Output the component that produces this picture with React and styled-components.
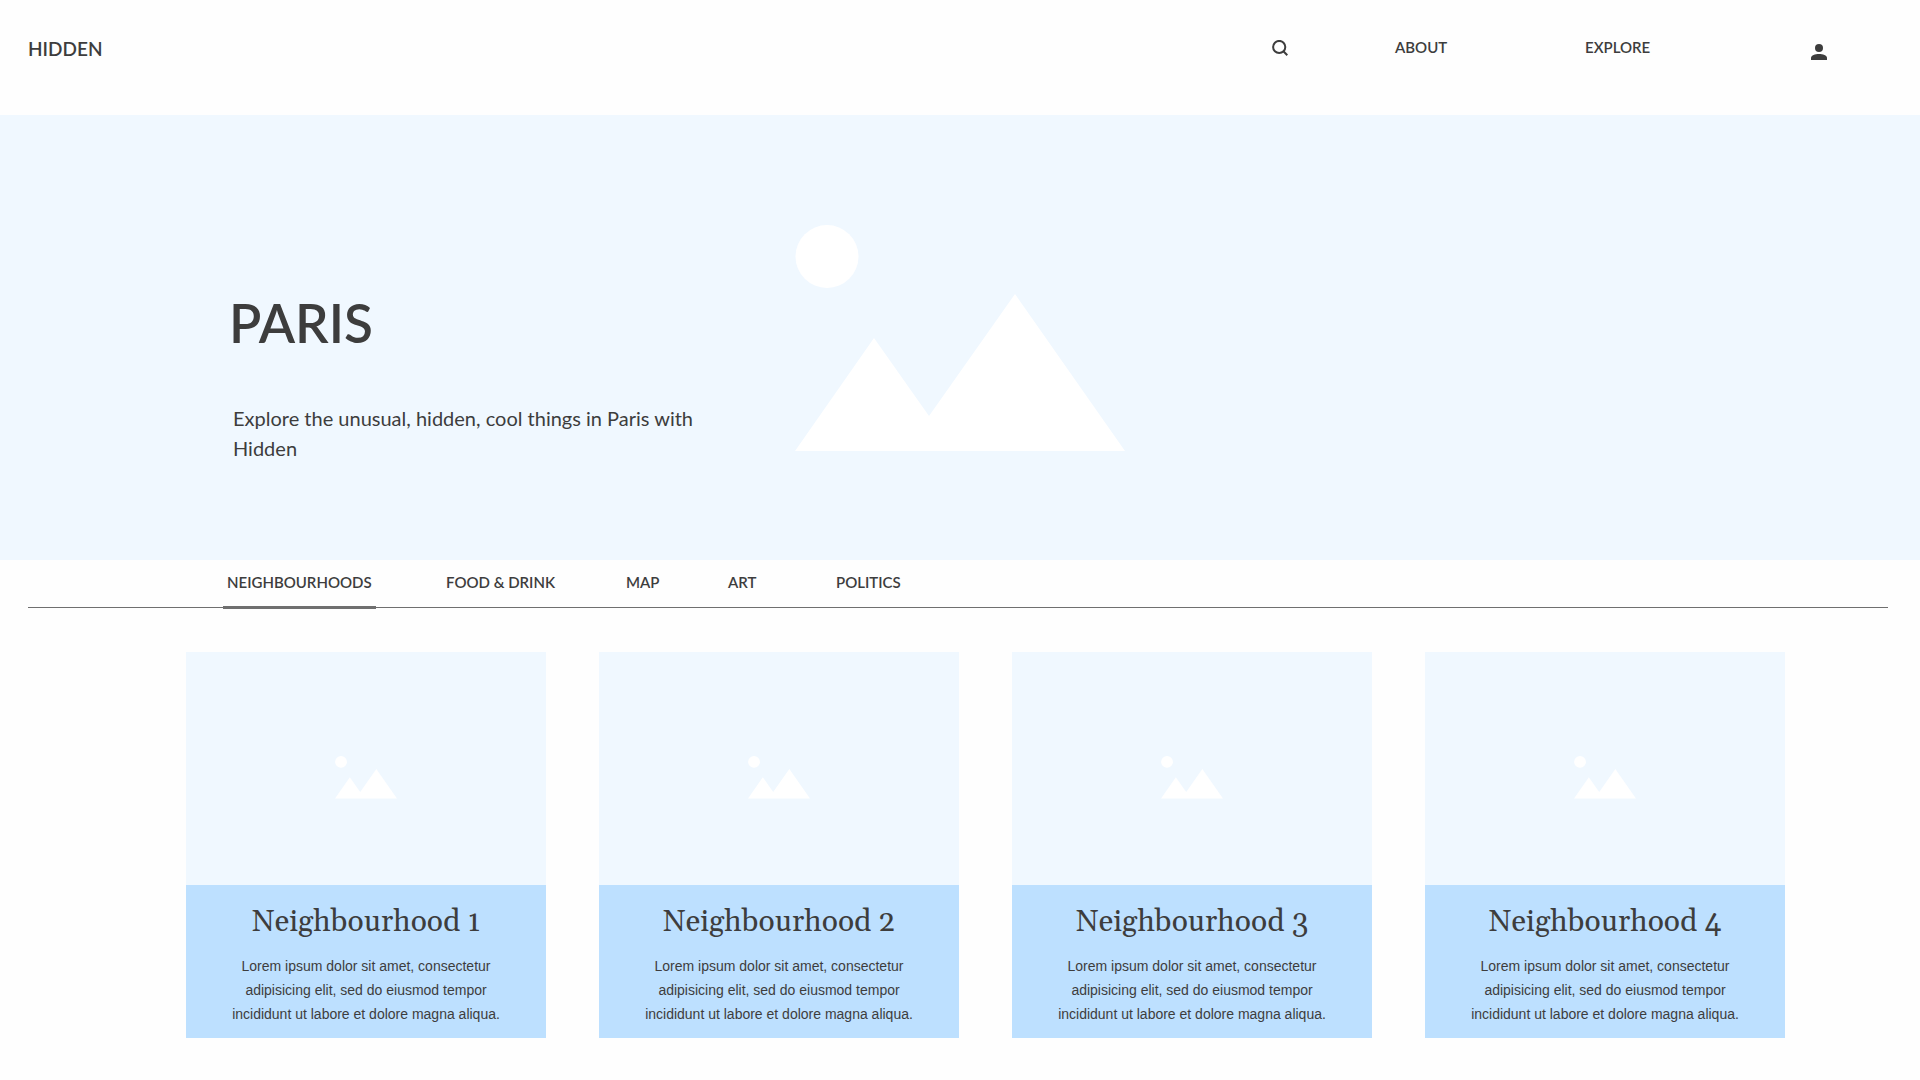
import React, { useState } from "react";
import styled, { createGlobalStyle } from "styled-components";

const GlobalStyle = createGlobalStyle`
  *, *::before, *::after { box-sizing: border-box; }
  body {
    margin: 0;
    background: #fefefe;
    color: #3d3d3d;
    font-family: Lato, "Liberation Sans", sans-serif;
  }
  h1, h2, p { margin: 0; }
`;

const Header = styled.header`
  display: flex;
  justify-content: space-between;
  align-items: flex-start;
  height: 115px;
  padding: 36px 93px 0 28px;
`;

const Logo = styled.a`
  color: inherit;
  font-size: 19px;
  font-weight: 600;
  line-height: 26px;
  text-decoration: none;
`;

const Nav = styled.nav`
  display: grid;
  grid-template-columns: 123px 190px 226px 16px;
  align-items: start;
`;

const NavLink = styled.a`
  color: inherit;
  font-size: 15px;
  font-weight: 600;
  line-height: 22px;
  text-decoration: none;
`;

const IconButton = styled.button`
  display: flex;
  justify-self: start;
  width: 16px;
  padding: ${(p) => (p.$low ? "8px 0 0" : "4px 0 0")};
  border: 0;
  background: none;
  color: inherit;
  cursor: pointer;
`;

const Hero = styled.section`
  display: grid;
  grid-template-columns: 565px 330px;
  align-items: start;
  min-height: 445px;
  padding: 110px 0 0 230px;
  background: #f0f8ff;
`;

const HeroText = styled.div`
  padding: 66px 100px 0 0;
`;

const HeroTitle = styled.h1`
  margin-left: -1px;
  font-size: 53px;
  font-weight: 600;
  line-height: 64px;
`;

const HeroLead = styled.p`
  margin-top: 48px;
  padding-left: 3px;
  font-size: 20px;
  line-height: 30px;
`;

const Art = styled.svg`
  display: block;
  width: ${(p) => p.$width}px;
  height: auto;
  fill: #ffffff;
`;

const Tabs = styled.nav`
  display: grid;
  grid-template-columns: 219px 180px 102px 108px auto;
  justify-content: start;
  height: 48px;
  margin: 0 32px 0 28px;
  padding: 10px 0 0 195px;
  border-bottom: 1px solid #6f6f6f;
`;

const Tab = styled.button`
  justify-self: start;
  height: 39px;
  padding: 0 4px 13px;
  border: 0;
  border-bottom: 3px solid ${(p) => (p.$active ? "#6f6f6f" : "transparent")};
  background: none;
  color: inherit;
  font: inherit;
  font-size: 15px;
  font-weight: 600;
  line-height: 24px;
  white-space: nowrap;
  cursor: pointer;
`;

const Cards = styled.main`
  display: grid;
  grid-template-columns: repeat(4, 1fr);
  gap: 53px;
  padding: 44px 135px 42px 186px;
`;

const Card = styled.article`
  display: flex;
  flex-direction: column;
`;

const CardImage = styled.div`
  display: flex;
  justify-content: center;
  align-items: center;
  height: 233px;
  padding-top: 18px;
  background: #f0f8ff;
`;

const CardBody = styled.div`
  padding: 17px 40px 12px;
  background: #bde0ff;
  text-align: center;
`;

const CardTitle = styled.h2`
  font-family: Gelasio, Georgia, "Liberation Serif", serif;
  font-size: 30px;
  font-weight: 400;
  line-height: 40px;
`;

const CardText = styled.p`
  margin-top: 12px;
  font-family: "Liberation Sans", Arial, sans-serif;
  font-size: 14px;
  line-height: 24px;
`;

function Landscape({ width }) {
  return (
    <Art $width={width} viewBox="0 0 330 226" aria-hidden="true">
      <circle cx="32" cy="31.5" r="31.5" />
      <path d="M0 226 79 113 134 191 220 69 330 226Z" />
    </Art>
  );
}

const tabs = ["NEIGHBOURHOODS", "FOOD & DRINK", "MAP", "ART", "POLITICS"];
const places = ["Neighbourhood 1", "Neighbourhood 2", "Neighbourhood 3", "Neighbourhood 4"];

export default function App() {
  const [active, setActive] = useState(tabs[0]);

  return (
    <>
      <GlobalStyle />
      <Header>
        <Logo href="#">HIDDEN</Logo>
        <Nav aria-label="Main">
          <IconButton type="button" aria-label="Search">
            <svg width="16" height="16" viewBox="0 0 16 16" fill="none" stroke="currentColor" strokeWidth="2">
              <circle cx="7.2" cy="7" r="6.1" />
              <path d="M11.4 11.3 15.3 15.3" />
            </svg>
          </IconButton>
          <NavLink href="#about">ABOUT</NavLink>
          <NavLink href="#explore">EXPLORE</NavLink>
          <IconButton type="button" aria-label="Account" $low>
            <svg width="16" height="16" viewBox="0 0 16 16" fill="currentColor">
              <circle cx="8" cy="4" r="4" />
              <path d="M0 16v-2c0-2.7 4.2-4 8-4s8 1.3 8 4v2Z" />
            </svg>
          </IconButton>
        </Nav>
      </Header>
      <Hero>
        <HeroText>
          <HeroTitle>PARIS</HeroTitle>
          <HeroLead>Explore the unusual, hidden, cool things in Paris with Hidden</HeroLead>
        </HeroText>
        <Landscape width={330} />
      </Hero>
      <Tabs aria-label="Categories">
        {tabs.map((name) => (
          <Tab key={name} type="button" $active={name === active} onClick={() => setActive(name)}>
            {name}
          </Tab>
        ))}
      </Tabs>
      <Cards>
        {places.map((name) => (
          <Card key={name}>
            <CardImage>
              <Landscape width={62} />
            </CardImage>
            <CardBody>
              <CardTitle>{name}</CardTitle>
              <CardText>
                Lorem ipsum dolor sit amet, consectetur adipisicing elit, sed do eiusmod tempor
                incididunt ut labore et dolore magna aliqua.
              </CardText>
            </CardBody>
          </Card>
        ))}
      </Cards>
    </>
  );
}
